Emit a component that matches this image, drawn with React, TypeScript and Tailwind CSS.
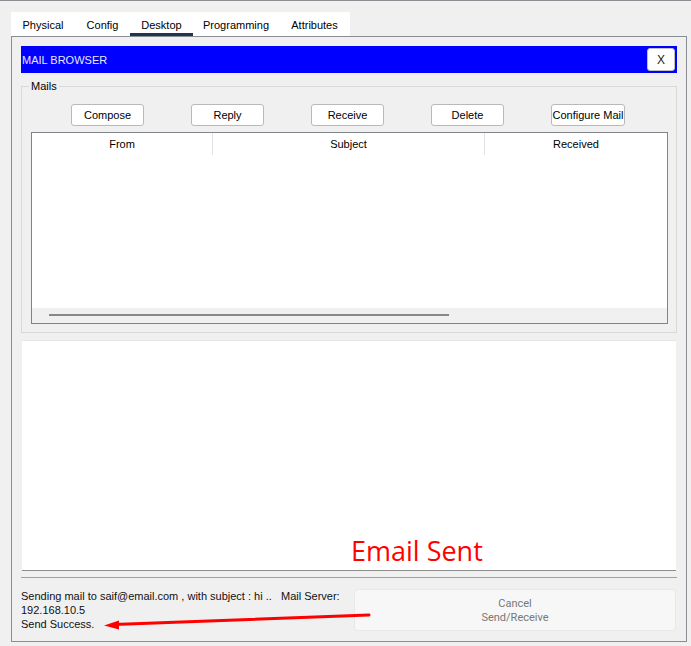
import React from "react";

const tabs = [
  { label: "Physical", w: "w-[64px]", active: false },
  { label: "Config", w: "w-[55px]", active: false },
  { label: "Desktop", w: "w-[63px]", active: true },
  { label: "Programming", w: "w-[86px]", active: false },
  { label: "Attributes", w: "w-[71px]", active: false },
];

const buttons = ["Compose", "Reply", "Receive", "Delete", "Configure Mail"];

export default function App() {
  return (
    <div
      className="relative w-[691px] h-[646px] bg-[#f0f0f0] border-t border-[#8a8d92] overflow-hidden text-[11px] text-black"
      style={{ fontFamily: '"Liberation Sans", Arial, sans-serif' }}
    >
      {/* Tabs */}
      <div className="ml-[11px] mt-[11px] flex w-[339px] h-[24px] bg-white">
        {tabs.map((t) => (
          <div
            key={t.label}
            className={`${t.w} h-[24px] flex flex-col items-center justify-between`}
          >
            <div className="pt-[7px] leading-[13px]">{t.label}</div>
            <div className={`w-full h-[3px] ${t.active ? "bg-[#1f3352]" : "bg-transparent"}`} />
          </div>
        ))}
      </div>

      {/* Main panel */}
      <div className="ml-[11px] w-[676px] h-[606px] border border-[#8a8d92] px-[9px] pt-[9px] flex flex-col">
        {/* Blue header */}
        <div className="h-[27px] bg-[#0000ff] flex items-center justify-between pl-[1px] pr-[2px]">
          <span className="text-[#e8e8ff] leading-[13px] pt-[1px]">MAIL BROWSER</span>
          <div className="w-[28px] h-[23px] bg-white border border-[#bfbfbf] rounded-[3px] flex items-center justify-center text-[12px] text-[#222]">
            X
          </div>
        </div>

        {/* Mails fieldset */}
        <fieldset className="mt-[7px] border border-[#d9d9d9] h-[253px] px-0 pb-0">
          <legend className="ml-[7px] px-[2px] leading-[13px]">Mails</legend>
          <div className="mt-[11px] flex gap-[47px] pl-[49px]">
            {buttons.map((b) => (
              <div
                key={b}
                className={`${b === "Configure Mail" ? "w-[74px]" : "w-[73px]"} h-[22px] bg-white border border-[#b9b9b9] rounded-[3px] flex items-center justify-center leading-[13px]`}
              >
                {b}
              </div>
            ))}
          </div>

          {/* Table */}
          <div className="ml-[9px] mt-[6px] w-[637px] h-[192px] border border-[#80848a] bg-white flex flex-col">
            <div className="h-[22px] flex">
              <div className="w-[181px] flex items-center justify-center border-r border-[#e3e3e3]">From</div>
              <div className="w-[272px] flex items-center justify-center border-r border-[#e3e3e3]">Subject</div>
              <div className="flex-1 flex items-center justify-center">Received</div>
            </div>
            <div className="flex-1" />
            <div className="h-[15px] bg-[#f0f0f0] pl-[17px] pt-[6px]">
              <div className="w-[400px] h-[2px] bg-[#888888]" />
            </div>
          </div>
        </fieldset>

        {/* Text area */}
        <div className="mt-[7px] ml-[1px] w-[654px] h-[231px] bg-white border-t border-[#e6e6e6] border-b border-b-[#8c8c8c] flex items-end pl-[329px] pb-[3px]">
          <span
            className="text-[27px] leading-[32px] text-[#ff0000]"
            style={{ fontFamily: '"Open Sans", "Noto Sans", sans-serif' }}
          >
            Email Sent
          </span>
        </div>

        {/* Separator */}
        <div className="mt-[6px] h-[1px] bg-[#a0a0a0]" />

        {/* Bottom */}
        <div className="mt-[10px] flex justify-between items-start">
          <div className="pt-[1px] leading-[14px] text-[#111]">
            <div>Sending mail to saif@email.com , with subject : hi ..&nbsp;&nbsp;&nbsp;Mail Server:</div>
            <div>192.168.10.5</div>
            <div>Send Success.</div>
          </div>
          <div
            className="mt-[1px] w-[322px] h-[42px] bg-[#f7f7f7] border border-[#e8e8e8] rounded-[4px] flex flex-col items-center justify-center pt-[2px] text-[11px] leading-[14px] text-[#777777] mr-[1px]"
            style={{ fontFamily: 'Roboto, "Liberation Sans", sans-serif' }}
          >
            <span>Cancel</span>
            <span>Send/Receive</span>
          </div>
        </div>
      </div>

      {/* Red annotation arrow */}
      <svg
        className="absolute left-0 top-0 pointer-events-none"
        width="691"
        height="646"
        viewBox="0 0 691 646"
      >
        <line x1="369" y1="614" x2="114" y2="623.5" stroke="#ff0000" strokeWidth="3" strokeLinecap="round" />
        <polygon points="104,624.5 119,619.5 119,628.5" fill="#ff0000" />
      </svg>
    </div>
  );
}
